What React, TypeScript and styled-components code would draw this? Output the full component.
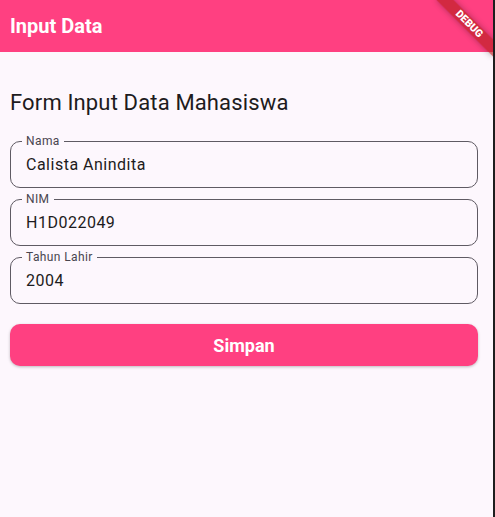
import React from "react";
import styled, { createGlobalStyle } from "styled-components";

const GlobalStyle = createGlobalStyle`
  html, body {
    margin: 0;
    padding: 0;
    background: #1e1e1e;
  }
  body {
    font-family: Roboto, "Noto Sans", sans-serif;
  }
  * { box-sizing: border-box; }
`;

const PINK = "#FF4081";
const SURFACE = "#FDF7FD";

const Frame = styled.div`
  position: relative;
  width: 493px;
  height: 517px;
  background: ${SURFACE};
  overflow: hidden;
`;

const AppBar = styled.header`
  height: 52px;
  background: ${PINK};
  display: flex;
  align-items: center;
  padding-left: 10px;
`;

const AppTitle = styled.h1`
  margin: 0;
  color: #ffffff;
  font-size: 20px;
  font-weight: 700;
  line-height: 24px;
`;

const DebugBanner = styled.div`
  position: absolute;
  left: 429px;
  top: 18px;
  width: 80px;
  height: 12px;
  transform: rotate(45deg);
  background: rgba(183, 28, 28, 0.63);
  box-shadow: 0 0 6px rgba(0, 0, 0, 0.3);
  color: #ffffff;
  font-size: 10.5px;
  font-weight: 900;
  line-height: 12px;
  text-align: center;
`;

const Content = styled.main`
  padding: 37px 15px 0 10px;
  display: flex;
  flex-direction: column;
`;

const Heading = styled.h2`
  margin: 0 0 24px;
  font-size: 22px;
  font-weight: 400;
  line-height: 28px;
  letter-spacing: 0.15px;
  color: #1d1b20;
`;

const Fields = styled.div`
  display: flex;
  flex-direction: column;
  gap: 11px;
`;

const Field = styled.div`
  position: relative;
  height: 47px;
  border: 1px solid #5f5a63;
  border-radius: 10px;
  display: flex;
  align-items: center;
  padding: 0 15px;
`;

const FloatingLabel = styled.label`
  position: absolute;
  top: -8px;
  left: 11px;
  padding: 0 4px;
  background: ${SURFACE};
  font-size: 12px;
  line-height: 14px;
  letter-spacing: 0.4px;
  color: #49454f;
`;

const Input = styled.input`
  border: none;
  outline: none;
  background: transparent;
  width: 100%;
  padding: 0;
  font-family: Roboto, "Noto Sans", sans-serif;
  font-size: 16px;
  letter-spacing: 0.5px;
  color: #1d1b20;
  line-height: 24px;
`;

const SaveButton = styled.button`
  margin-top: 20px;
  height: 42px;
  width: 100%;
  border: none;
  border-radius: 10px;
  background: ${PINK};
  color: #ffffff;
  font-family: Roboto, "Noto Sans", sans-serif;
  font-size: 18px;
  font-weight: 700;
  box-shadow: 0 1px 3px rgba(0, 0, 0, 0.25);
  cursor: pointer;
`;

const fields = [
  { id: "nama", label: "Nama", value: "Calista Anindita" },
  { id: "nim", label: "NIM", value: "H1D022049" },
  { id: "tahun", label: "Tahun Lahir", value: "2004" },
];

export default function App() {
  return (
    <>
      <GlobalStyle />
      <Frame>
        <AppBar>
          <AppTitle>Input Data</AppTitle>
        </AppBar>
        <DebugBanner>DEBUG</DebugBanner>
        <Content>
          <Heading>Form Input Data Mahasiswa</Heading>
          <Fields>
            {fields.map((f) => (
              <Field key={f.id}>
                <FloatingLabel htmlFor={f.id}>{f.label}</FloatingLabel>
                <Input id={f.id} defaultValue={f.value} />
              </Field>
            ))}
          </Fields>
          <SaveButton>Simpan</SaveButton>
        </Content>
      </Frame>
    </>
  );
}
